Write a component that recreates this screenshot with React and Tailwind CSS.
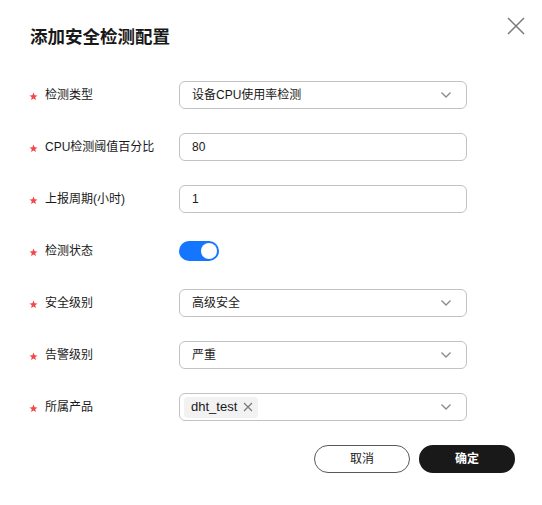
import React from "react";

const Chevron = () => (
  <svg width="12" height="8" viewBox="0 0 12 8" className="shrink-0">
    <path d="M1.5 1.5 L6 6 L10.5 1.5" fill="none" stroke="#8a8a8a" strokeWidth="1.3" />
  </svg>
);

const Star = () => (
  <svg width="9" height="9" viewBox="0 0 24 24" className="mr-[7px] mt-[2px] shrink-0">
    <path
      d="M12 1.5 L14.9 8.6 L22.5 9.2 L16.7 14.1 L18.5 21.6 L12 17.6 L5.5 21.6 L7.3 14.1 L1.5 9.2 L9.1 8.6 Z"
      fill="#f2484b"
    />
  </svg>
);

const Row = ({ label, children }) => (
  <div className="flex items-center h-[28px] mb-[24px]">
    <div className="w-[150px] flex items-center text-[12px] text-[#191919]">
      <Star />
      <span>{label}</span>
    </div>
    <div className="w-[288px]">{children}</div>
  </div>
);

const Select = ({ value }) => (
  <div className="h-[28px] border border-[#c2c2c2] rounded-[6px] flex items-center justify-between pl-[12px] pr-[14px] text-[12px] text-[#191919]">
    <span>{value}</span>
    <Chevron />
  </div>
);

const Input = ({ value }) => (
  <div className="h-[28px] border border-[#c2c2c2] rounded-[6px] flex items-center pl-[12px] text-[12px] text-[#191919]">
    {value}
  </div>
);

export default function App() {
  return (
    <div
      className="w-[542px] h-[505px] bg-white relative overflow-hidden"
      style={{ fontFamily: '"Liberation Sans", "Noto Sans CJK SC", sans-serif' }}
    >
      <button className="absolute top-[17px] right-[17px] w-[18px] h-[18px] flex items-center justify-center">
        <svg width="18" height="18" viewBox="0 0 18 18">
          <path d="M1 1 L17 17 M17 1 L1 17" stroke="#7a7a7a" strokeWidth="1.5" />
        </svg>
      </button>
      <div className="pl-[30px] pt-[23px]">
        <h1 className="text-[17.5px] font-bold leading-[28px] text-[#191919]">添加安全检测配置</h1>
      </div>
      <div className="pl-[29px] mt-[30px]">
        <Row label="检测类型">
          <Select value="设备CPU使用率检测" />
        </Row>
        <Row label="CPU检测阈值百分比">
          <Input value="80" />
        </Row>
        <Row label="上报周期(小时)">
          <Input value="1" />
        </Row>
        <Row label="检测状态">
          <div className="flex items-center">
            <div className="w-[40px] h-[20px] rounded-full bg-[#1476ff] flex items-center justify-end pr-[2px]">
              <div className="w-[16px] h-[16px] rounded-full bg-white" />
            </div>
          </div>
        </Row>
        <Row label="安全级别">
          <Select value="高级安全" />
        </Row>
        <Row label="告警级别">
          <Select value="严重" />
        </Row>
        <Row label="所属产品">
          <div className="h-[28px] border border-[#c2c2c2] rounded-[6px] flex items-center justify-between pl-[4px] pr-[14px] text-[13px] text-[#191919]">
            <div className="h-[21px] bg-[#f2f2f2] rounded-[4px] flex items-center pl-[7px] pr-[5px] gap-[6px]">
              <span>dht_test</span>
              <svg width="10" height="10" viewBox="0 0 10 10">
                <path d="M1 1 L9 9 M9 1 L1 9" stroke="#7a7a7a" strokeWidth="1.2" />
              </svg>
            </div>
            <Chevron />
          </div>
        </Row>
      </div>
      <div className="flex justify-end gap-[9px] pr-[27px]">
        <button className="w-[96px] h-[28px] rounded-full border border-[#595959] bg-white text-[12px] text-[#191919]">
          取消
        </button>
        <button className="w-[96px] h-[28px] rounded-full bg-[#191919] text-[12px] text-white font-bold">
          确定
        </button>
      </div>
    </div>
  );
}
